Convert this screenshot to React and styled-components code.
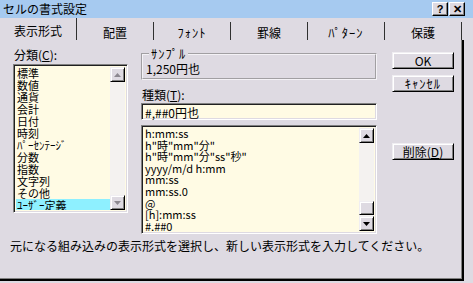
import React from 'react';
import styled, {createGlobalStyle} from 'styled-components';

const GlobalStyle = createGlobalStyle`
  html, body {
    margin: 0;
    padding: 0;
    background: #dedae2;
  }
  * {
    box-sizing: border-box;
  }
`

const FONT = `"Noto Sans CJK JP", "Liberation Sans", sans-serif`;

const Window = styled.div`
  width: 473px;
  height: 283px;
  background: #dedae2;
  font-family: ${FONT};
  font-size: 12px;
  color: #000;
  overflow: hidden;
`

const TitleBar = styled.div`
  height: 18px;
  background: #a6caf0;
  display: flex;
  align-items: center;
  justify-content: space-between;
  padding: 0 8px 0 3px;
  line-height: 18px;
`

const CaptionButtons = styled.div`
  display: flex;
  gap: 1px;
`

const CaptionButton = styled.div`
  width: 16px;
  height: 14px;
  background: #dedae2;
  border-top: 1px solid #fff;
  border-left: 1px solid #fff;
  border-right: 1px solid #000;
  border-bottom: 1px solid #000;
  box-shadow: inset -1px -1px 0 #808080;
  display: flex;
  align-items: center;
  justify-content: center;
  font-family: "Liberation Sans", sans-serif;
  font-weight: bold;
  font-size: 11px;
  line-height: 1;
`

const TabStrip = styled.div`
  display: flex;
  width: 462px;
  height: 22px;
  padding-top: 2px;
`

const Tab = styled.div`
  flex: 1;
  display: flex;
  align-items: center;
  justify-content: center;
  border-right: 1px solid #303030;
  margin-top: ${props => props.$active ? '-2px' : '2px'};
  font-size: 12px;
  padding-top: 2px;
`

const Kana = styled.span`
  font-size: 12.5px;
  letter-spacing: 1px;
`

const Page = styled.div`
  width: 464px;
  height: 241px;
  border-right: 2px solid #000;
  border-bottom: 2px solid #000;
  box-shadow: inset -1px -1px 0 #808080;
  padding: 8px 0 0 13px;
`

const Columns = styled.div`
  display: flex;
  align-items: flex-start;
  height: 190px;
`

const LeftColumn = styled.div`
  width: 115px;
  flex-shrink: 0;
`

const MidColumn = styled.div`
  width: 236px;
  flex-shrink: 0;
  margin-left: 13px;
`

const RightColumn = styled.div`
  width: 62px;
  flex-shrink: 0;
  margin-left: 15px;
  padding-top: 4px;
`

const Label = styled.div`
  height: 14px;
  line-height: 14px;
  margin-bottom: ${props => props.$gap || 2}px;
  margin-top: ${props => props.$top || 0}px;
  padding-left: 1px;
  u {
    text-decoration: underline;
  }
`

const Sunken = styled.div`
  border-top: 1px solid #808080;
  border-left: 1px solid #808080;
  border-right: 1px solid #fff;
  border-bottom: 1px solid #fff;
  box-shadow: inset 1px 1px 0 #202020, inset -1px -1px 0 #dedae2;
  background: #fffbe4;
`

const ListBox = styled(Sunken)`
  height: ${props => props.$h}px;
  display: flex;
  padding: 2px;
`

const Items = styled.div`
  flex: 1;
  overflow: hidden;
`

const Item = styled.div`
  height: ${props => props.$lh || 12}px;
  line-height: ${props => props.$lh || 12}px;
  padding-left: 1px;
  white-space: nowrap;
  font-size: 11px;
  background: ${props => props.$selected ? '#8ef0ff' : 'transparent'};
`

const ScrollBar = styled.div`
  width: 15px;
  display: flex;
  flex-direction: column;
  background: #f4f2f0;
`

const Track = styled.div`
  flex: 1;
  display: flex;
  flex-direction: column;
  justify-content: flex-end;
`

const Raised = styled.div`
  background: #dedae2;
  border-top: 1px solid #f0eef2;
  border-left: 1px solid #f0eef2;
  border-right: 1px solid #000;
  border-bottom: 1px solid #000;
  box-shadow: inset 1px 1px 0 #fff, inset -1px -1px 0 #808080;
`

const ScrollButton = styled(Raised)`
  height: 15px;
  flex-shrink: 0;
  display: flex;
  align-items: center;
  justify-content: center;
  color: ${props => props.$disabled ? '#8c8890' : '#000'};
`

const Thumb = styled(Raised)`
  height: 14px;
  margin-bottom: 1px;
`

const GroupBox = styled.fieldset`
  margin: 0;
  padding: 0 0 3px 3px;
  height: 32px;
  border: 2px groove #f4f2f6;
  min-width: 0;
`

const Legend = styled.legend`
  padding: 0 2px;
  margin-left: 3px;
  line-height: 12px;
  font-size: 12px;
`

const Sample = styled.div`
  line-height: 14px;
  padding-top: 2px;
`

const Input = styled(Sunken)`
  height: 17px;
  line-height: 13px;
  padding: 2px 3px;
  margin-bottom: 5px;
`

const Button = styled(Raised)`
  height: 17px;
  display: flex;
  align-items: center;
  justify-content: center;
  font-size: 12px;
  margin-top: ${props => props.$mt || 0}px;
  u {
    text-decoration: underline;
  }
`

const Hint = styled.div`
  margin: 1px 0 0 -3px;
  line-height: 14px;
  font-size: 12px;
  white-space: nowrap;
`

const Arrow = ({down}) => (
  <svg width="7" height="4" viewBox="0 0 7 4">
    <polygon points={down ? '0,0 7,0 3.5,4' : '0,4 7,4 3.5,0'} fill="currentColor"/>
  </svg>
)

const categories = ['標準', '数値', '通貨', '会計', '日付', '時刻', 'ﾊﾟｰｾﾝﾃｰｼﾞ', '分数', '指数', '文字列', 'その他', 'ﾕｰｻﾞｰ定義'];

const formats = ['h:mm:ss', 'h"時"mm"分"', 'h"時"mm"分"ss"秒"', 'yyyy/m/d h:mm', 'mm:ss', 'mm:ss.0', '@', '[h]:mm:ss', '#,##0_'];

const tabs = ['表示形式', '配置', 'ﾌｫﾝﾄ', '罫線', 'ﾊﾟﾀｰﾝ', '保護'];

const App = () => {
  return (
    <Window>
      <GlobalStyle/>
      <TitleBar>
        <span>セルの書式設定</span>
        <CaptionButtons>
          <CaptionButton>?</CaptionButton>
          <CaptionButton>✕</CaptionButton>
        </CaptionButtons>
      </TitleBar>

      <TabStrip>
        {tabs.map((t, i) => (
          <Tab key={t} $active={i === 0}>
            {t.startsWith('ﾌ') || t.startsWith('ﾊ') ? <Kana>{t}</Kana> : t}
          </Tab>
        ))}
      </TabStrip>

      <Page>
        <Columns>
          <LeftColumn>
            <Label>分類(<u>C</u>):</Label>
            <ListBox $h={149}>
              <Items>
                {categories.map((c, i) => (
                  <Item key={c} $selected={i === categories.length - 1}>{c}</Item>
                ))}
              </Items>
              <ScrollBar>
                <ScrollButton $disabled><Arrow/></ScrollButton>
                <Track/>
                <ScrollButton $disabled><Arrow down/></ScrollButton>
              </ScrollBar>
            </ListBox>
          </LeftColumn>

          <MidColumn>
            <GroupBox>
              <Legend><Kana>ｻﾝﾌﾟﾙ</Kana></Legend>
              <Sample>1,250円也</Sample>
            </GroupBox>
            <Label $gap={1} $top={8}>種類(<u>T</u>):</Label>
            <Input>#,##0円也</Input>
            <ListBox $h={109}>
              <Items>
                {formats.map(f => (
                  <Item key={f} $lh={11.6}>{f}</Item>
                ))}
              </Items>
              <ScrollBar>
                <ScrollButton><Arrow/></ScrollButton>
                <Track><Thumb/></Track>
                <ScrollButton><Arrow down/></ScrollButton>
              </ScrollBar>
            </ListBox>
          </MidColumn>

          <RightColumn>
            <Button>OK</Button>
            <Button $mt={6}><Kana>ｷｬﾝｾﾙ</Kana></Button>
            <Button $mt={51}>削除(<u>D</u>)</Button>
          </RightColumn>
        </Columns>

        <Hint>元になる組み込みの表示形式を選択し、新しい表示形式を入力してください。</Hint>
      </Page>
    </Window>
  )
}

export default App;
